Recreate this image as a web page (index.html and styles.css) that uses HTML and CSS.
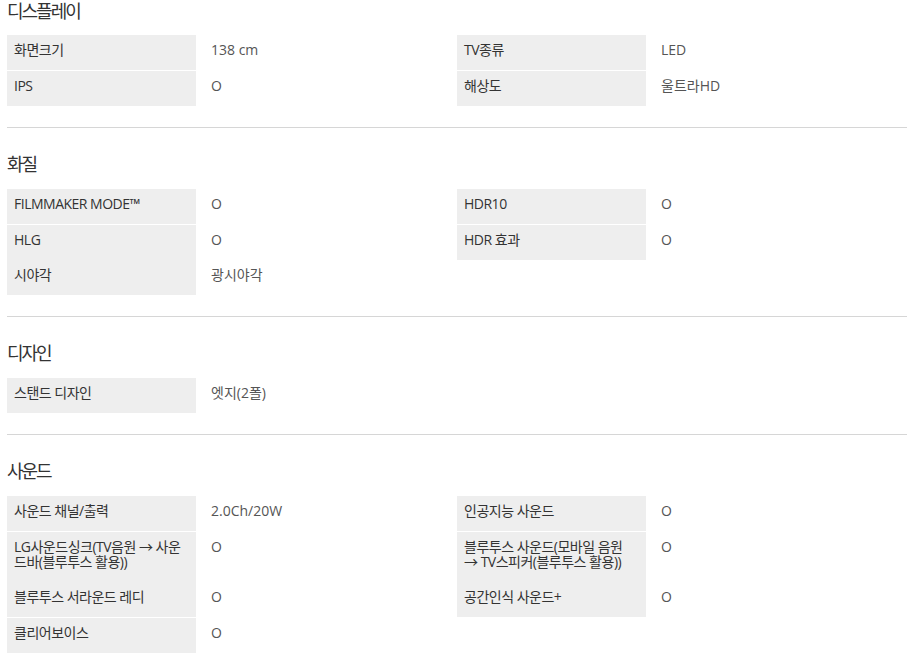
FILE: index.html
```html
<!DOCTYPE html>
<html lang="ko">
<head>
<meta charset="utf-8">
<title>제품 사양</title>
<link rel="stylesheet" href="styles.css">
</head>
<body>
<div class="spec">
  <section class="spec-section">
    <h3 class="spec-title">디스플레이</h3>
    <div class="spec-list">
      <div class="spec-item"><div class="spec-label">화면크기</div><div class="spec-value">138 cm</div></div>
      <div class="spec-item"><div class="spec-label">TV종류</div><div class="spec-value">LED</div></div>
      <div class="spec-item"><div class="spec-label">IPS</div><div class="spec-value">O</div></div>
      <div class="spec-item"><div class="spec-label">해상도</div><div class="spec-value">울트라HD</div></div>
    </div>
  </section>
  <section class="spec-section">
    <h3 class="spec-title">화질</h3>
    <div class="spec-list">
      <div class="spec-item"><div class="spec-label">FILMMAKER MODE™</div><div class="spec-value">O</div></div>
      <div class="spec-item"><div class="spec-label">HDR10</div><div class="spec-value">O</div></div>
      <div class="spec-item"><div class="spec-label">HLG</div><div class="spec-value">O</div></div>
      <div class="spec-item"><div class="spec-label">HDR 효과</div><div class="spec-value">O</div></div>
      <div class="spec-item"><div class="spec-label">시야각</div><div class="spec-value">광시야각</div></div>
    </div>
  </section>
  <section class="spec-section">
    <h3 class="spec-title">디자인</h3>
    <div class="spec-list">
      <div class="spec-item"><div class="spec-label">스탠드 디자인</div><div class="spec-value">엣지(2폴)</div></div>
    </div>
  </section>
  <section class="spec-section">
    <h3 class="spec-title">사운드</h3>
    <div class="spec-list">
      <div class="spec-item"><div class="spec-label">사운드 채널/출력</div><div class="spec-value">2.0Ch/20W</div></div>
      <div class="spec-item"><div class="spec-label">인공지능 사운드</div><div class="spec-value">O</div></div>
      <div class="spec-item"><div class="spec-label">LG사운드싱크(TV음원 → 사운드바(블루투스 활용))</div><div class="spec-value">O</div></div>
      <div class="spec-item"><div class="spec-label">블루투스 사운드(모바일 음원 → TV스피커(블루투스 활용))</div><div class="spec-value">O</div></div>
      <div class="spec-item"><div class="spec-label">블루투스 서라운드 레디</div><div class="spec-value">O</div></div>
      <div class="spec-item"><div class="spec-label">공간인식 사운드+</div><div class="spec-value">O</div></div>
      <div class="spec-item"><div class="spec-label">클리어보이스</div><div class="spec-value">O</div></div>
    </div>
  </section>
</div>
</body>
</html>
```

FILE: styles.css
```css
* {
  box-sizing: border-box;
}

html, body {
  margin: 0;
  padding: 0;
  background: #ffffff;
}

body {
  font-family: "Open Sans", "Noto Sans CJK KR", sans-serif;
  color: #333333;
  overflow: hidden;
}

.spec {
  width: 900px;
  margin-left: 7px;
}

.spec-section {
  padding-top: 25px;
  padding-bottom: 21px;
  border-bottom: 1px solid #d6d6d6;
}

.spec-section:first-child {
  padding-top: 0;
}

.spec-title {
  margin: 0 0 14px;
  font-size: 18px;
  line-height: 22px;
  font-weight: 400;
  letter-spacing: -2px;
  color: #333333;
}

.spec-section:first-child .spec-title {
  margin-bottom: 13px;
}

.spec-list {
  display: flex;
  flex-wrap: wrap;
}

.spec-item {
  display: flex;
  width: 50%;
}

.spec-item:nth-child(4n+3),
.spec-item:nth-child(4n+4) {
  border-top: 1px solid #ffffff;
}

.spec-label {
  width: 189px;
  flex: none;
  background: #eeeeee;
  padding: 7px 7px 13px;
  font-size: 14px;
  line-height: 15px;
  letter-spacing: -0.5px;
  color: #333333;
}

.spec-value {
  flex: 1;
  padding: 7px 15px 13px;
  font-size: 14px;
  line-height: 15px;
  color: #555555;
}
```
